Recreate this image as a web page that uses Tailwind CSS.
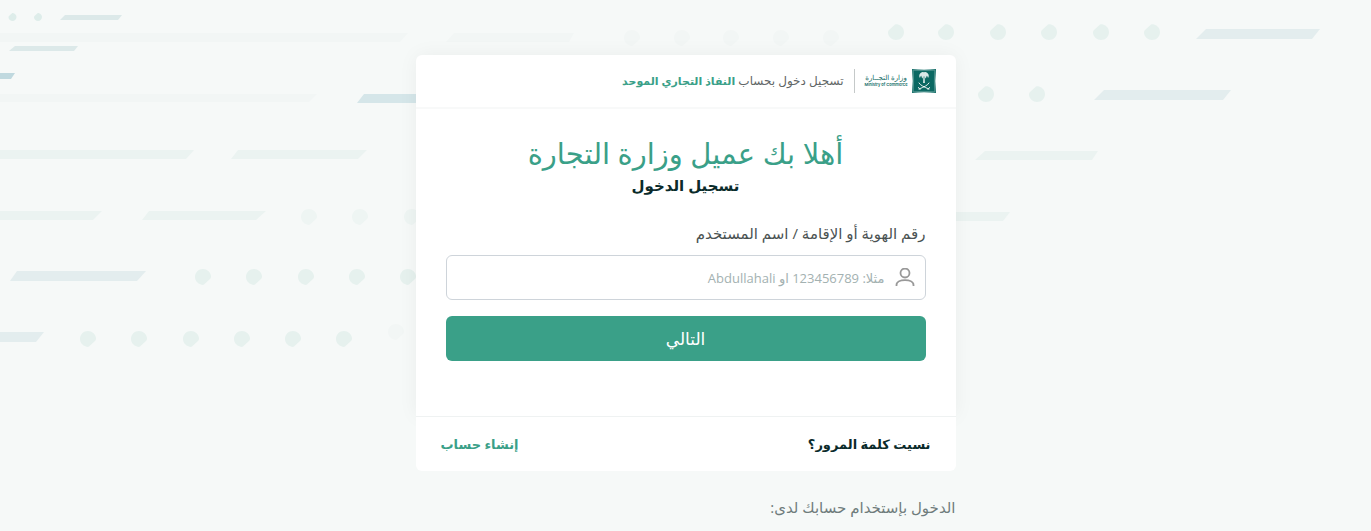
<!DOCTYPE html>
<html lang="ar" dir="rtl">

<head>
    <meta charset="utf-8">
    <title>تسجيل الدخول</title>
    <meta name="viewport" content="width=device-width, initial-scale=1">
    <script src="https://cdn.jsdelivr.net/npm/@tailwindcss/browser@4"></script>
</head>

<body class="relative min-h-screen overflow-x-hidden bg-[#f6f9f8] font-['Open_Sans','DejaVu_Sans',sans-serif] text-[#0b2b2b]">

    <!-- background pattern -->
    <svg class="absolute inset-0 h-full w-full" viewBox="0 0 1371 531" preserveAspectRatio="xMidYMin slice" aria-hidden="true">
        <defs>
            <path id="drop" d="M0-8C4-8 7.500-5 8-1C8 0 8 1 7 2L1 7.500C0 8-1 8-2 7.500C-5.500 6.500-8 3.500-8 0C-8-4.500-4.500-8 0-8Z" />
            <path id="drop-up" d="M0 8C-4 8-7.500 5-8 1C-8 0-8-1-7-2L-1-7.500C0-8 1-8 2-7.500C5.500-6.500 8-3.500 8 0C8 4.500 4.500 8 0 8Z" />
        </defs>
        <g fill="#deedea">
            <use href="#drop-up" transform="translate(12.500 17) scale(.5)" />
            <use href="#drop-up" transform="translate(38 17) scale(.5)" />
        </g>
        <g fill="#dce9e9">
            <path d="M65 15H122L118 20H60Z" />
            <path d="M15 46H78L74 51H9Z" />
        </g>
        <path fill="#c0d9df" d="M0 73H15L11 79H0Z" />
        <g fill="#f2f6f5">
            <path d="M0 33H408L400 42H0Z" />
            <path d="M0 94H317L309 102H0Z" />
            <path d="M454 33H574L569 42H446Z" />
            <use href="#drop" x="632" y="38" />
            <use href="#drop" x="682" y="38" />
            <use href="#drop" x="731" y="38" />
            <use href="#drop" x="781" y="38" />
            <use href="#drop" x="831" y="38" />
            <use href="#drop" x="396" y="332" />
        </g>
        <path fill="#d5e6e9" d="M364 94H440V103H357Z" />
        <g fill="#ebf3f1">
            <path d="M0 150H194L186 159H0Z" />
            <path d="M238 150H367L358 159H231Z" />
            <path d="M0 211H102L93 220H0Z" />
            <path d="M149 211H266L256 220H142Z" />
            <path d="M985 151H1098L1092 160H975Z" />
            <path d="M940 212H1010L1003 221H940Z" />
        </g>
        <g fill="#eef5f3">
            <use href="#drop" x="309" y="217" />
            <use href="#drop" x="360" y="217" />
            <use href="#drop" x="412" y="217" />
        </g>
        <g fill="#e3edee">
            <path d="M17 271H146L137 281H10Z" />
            <path d="M0 332H44L36 342H0Z" />
            <path d="M1206 29H1320L1312 39H1196Z" />
            <path d="M1104 90H1231L1223 100H1094Z" />
        </g>
        <g fill="#e6f1ee">
            <use href="#drop" x="203" y="277" />
            <use href="#drop" x="254" y="277" />
            <use href="#drop" x="306" y="277" />
            <use href="#drop" x="357" y="277" />
            <use href="#drop" x="408" y="277" />
            <use href="#drop" x="88" y="339" />
            <use href="#drop" x="139" y="339" />
            <use href="#drop" x="191" y="339" />
            <use href="#drop" x="242" y="339" />
            <use href="#drop" x="293" y="339" />
            <use href="#drop" x="344" y="339" />
            <use href="#drop-up" x="896" y="32" />
            <use href="#drop-up" x="946" y="32" />
            <use href="#drop-up" x="998" y="32" />
            <use href="#drop-up" x="1049" y="32" />
            <use href="#drop-up" x="1101" y="32" />
            <use href="#drop-up" x="1152" y="32" />
            <use href="#drop-up" x="986" y="94" />
            <use href="#drop-up" x="1037" y="94" />
        </g>
    </svg>

    <main class="relative mx-auto max-w-[540px] pt-[55px]">
        <div class="rounded-t-md bg-white shadow-[0_0_20px_rgba(0,0,0,0.05)]">
            <header class="flex h-[54px] items-center border-b-2 border-[#f8f9f9] px-5">
                <div class="flex items-center gap-1">
                    <svg class="size-6" viewBox="0 0 24 24" role="img" aria-label="وزارة التجارة">
                        <path fill="#0b6862" d="M0 0Q12 1.500 24 0Q22.500 12 24 24Q12 22.500 0 24Q1.500 12 0 0Z" />
                        <path fill="none" stroke="#8fbbb6" stroke-width=".5" d="M1.200 1.200Q12 2 22.800 1.200Q22 12 22.800 22.800Q12 22 1.200 22.800Q2 12 1.200 1.200Z" />
                        <path fill="#fff" fill-opacity=".85" d="M12 3.500C13.500 2.500 15.500 3.500 16.500 5.500C17 7 16.800 8 16 9C15.800 7.800 15.300 7 14.500 6.800C14.700 8 14.200 9 13.300 9.500C13.200 8.500 13 7.500 12.600 7L12.900 14H11.100L11.400 7C11 7.500 10.800 8.500 10.700 9.500C9.800 9 9.300 8 9.500 6.800C8.700 7 8.200 7.800 8 9C7.200 8 7 7 7.500 5.500C8.500 3.500 10.500 2.500 12 3.500Z" />
                        <path fill="none" stroke="#fff" stroke-width=".9" stroke-linecap="round" d="M7 14C8.500 16.500 12 18 17 20M17 14C15.500 16.500 12 18 7 20M6.500 18.500L8 20.500M17.500 18.500L16 20.500" />
                    </svg>
                    <div class="flex flex-col items-center text-[#0b6862]">
                        <span class="text-[7px] leading-[8px]">وزارة التجــارة</span>
                        <span class="font-['Inter',sans-serif] text-[4px] leading-[6px] font-semibold" dir="ltr">Ministry of Commerce</span>
                    </div>
                </div>
                <p class="mr-2.5 flex h-6 items-center border-r border-[#c5c9c9] pr-2.5 text-xs whitespace-pre text-[#5f6666]">تسجيل دخول بحساب <b class="text-[11px] text-[#3aa088]">النفاذ التجاري الموحد</b></p>
            </header>

            <form class="px-[30px] pt-6 pb-[55px]" onsubmit="return false">
                <h1 class="text-center text-[29px] leading-10 text-[#3aa088]">أهلا بك عميل وزارة التجارة</h1>
                <h2 class="text-center text-[15px] leading-6 font-bold">تسجيل الدخول</h2>
                <label for="username" class="mt-[26px] block text-[15px] leading-5 text-[#4a5252]">رقم الهوية أو الإقامة / اسم المستخدم</label>
                <div class="mt-3 flex h-[45px] items-center gap-2.5 rounded-md border border-[#ced4da] bg-white px-2.5">
                    <svg class="size-5 shrink-0" viewBox="0 0 20 20" fill="none" stroke="#999" stroke-width="1.800" aria-hidden="true">
                        <circle cx="10" cy="5" r="4.500" />
                        <path d="M1.500 18V17C1.500 10.500 18.500 10.500 18.500 17V18" />
                    </svg>
                    <input id="username" type="text" placeholder="مثلا: 123456789 او Abdullahali" class="min-w-0 flex-1 pt-0.5 text-[13px] outline-none placeholder:text-[#a3b1b1]">
                </div>
                <button type="submit" class="mt-4 block h-[45px] w-full rounded-md bg-[#3aa088] text-[17px] text-white">التالي</button>
            </form>
        </div>

        <footer class="relative flex h-[55px] items-center justify-between rounded-b-md border-t border-[#eff2f2] bg-white px-[25px] pt-0.5 text-[13px] font-bold">
            <a href="#">نسيت كلمة المرور؟</a>
            <a href="#" class="text-[#3aa088]">إنشاء حساب</a>
        </footer>

        <p class="mt-6 text-[15px] leading-6 text-[#6f7c7c]">الدخول بإستخدام حسابك لدى:</p>
    </main>
</body>

</html>
